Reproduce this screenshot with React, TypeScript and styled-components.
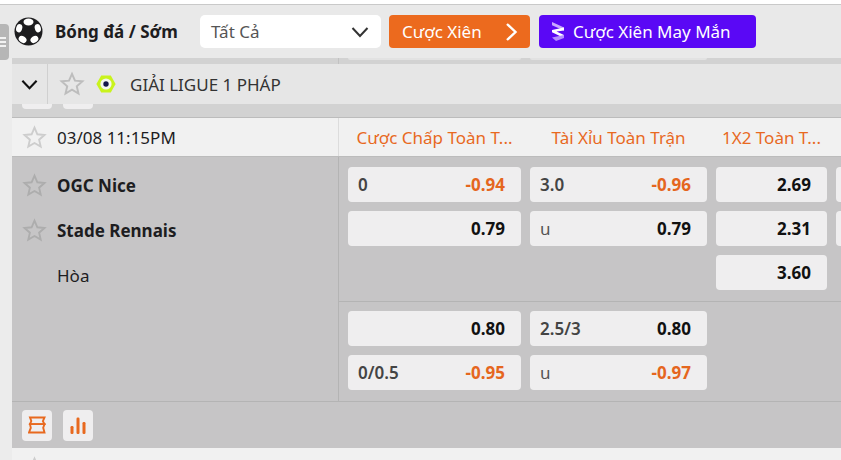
import React from "react";
import { createGlobalStyle, styled } from "styled-components";

const Global = createGlobalStyle`
  html, body { margin: 0; padding: 0; background: #ececec; }
  * { box-sizing: border-box; }
`;

type Odd = { left?: string; right?: string; hot?: boolean; thin?: boolean };

const topOdds: (Odd | null)[][] = [
  [{ left: "0", right: "-0.94", hot: true }, { right: "0.79" }, null],
  [{ left: "3.0", right: "-0.96", hot: true }, { left: "u", right: "0.79", thin: true }, null],
  [{ right: "2.69" }, { right: "2.31" }, { right: "3.60" }],
  [{}, {}, null],
];
const bottomOdds: (Odd | null)[][] = [
  [{ right: "0.80" }, { left: "0/0.5", right: "-0.95", hot: true }],
  [{ left: "2.5/3", right: "0.80" }, { left: "u", right: "-0.97", hot: true, thin: true }],
];

const StarIcon = ({ size = 24, color = "#adadad" }: { size?: number; color?: string }) => (
  <svg width={size} height={size} viewBox="0 0 24 24" fill="none">
    <path
      d="M12 2.6l2.75 6.3 6.85.65-5.17 4.55 1.52 6.7L12 17.3l-5.95 3.5 1.52-6.7L2.4 9.55l6.85-.65z"
      stroke={color}
      strokeWidth="1.8"
      strokeLinejoin="miter"
    />
  </svg>
);

const BallIcon = () => (
  <svg width="29" height="29" viewBox="0 0 29 29">
    <circle cx="14.5" cy="14.5" r="14" fill="#1d1d1f" />
    <path d="M14.5 10l4.4 3.2-1.7 5.2h-5.4l-1.7-5.2z" fill="#1d1d1f" />
    <ellipse cx="14.5" cy="5" rx="5" ry="3.4" fill="#fff" />
    <ellipse cx="5.2" cy="11.2" rx="3" ry="4.2" fill="#fff" transform="rotate(16 5.2 11.2)" />
    <ellipse cx="23.8" cy="11.2" rx="3" ry="4.2" fill="#fff" transform="rotate(-16 23.8 11.2)" />
    <ellipse cx="8.6" cy="22.4" rx="4.2" ry="3.2" fill="#fff" transform="rotate(35 8.6 22.4)" />
    <ellipse cx="20.4" cy="22.4" rx="4.2" ry="3.2" fill="#fff" transform="rotate(-35 20.4 22.4)" />
  </svg>
);

const ChevronDown = ({ size = 20, width = 2 }: { size?: number; width?: number }) => (
  <svg width={size} height={size} viewBox="0 0 20 20" fill="none">
    <path d="M2.5 6l7.5 8 7.5-8" stroke="currentColor" strokeWidth={width} />
  </svg>
);

const LeagueLogo = () => (
  <svg width="20" height="20" viewBox="0 0 20 20">
    <path d="M5.2 1.4h9.6L19.6 10l-4.8 8.6H5.2L.4 10z" fill="#c9f31d" />
    <circle cx="10" cy="10" r="5.6" fill="#f4f6ee" />
    <circle cx="10" cy="10" r="2.7" fill="#14164a" />
  </svg>
);

const LuckyIcon = () => (
  <svg width="14" height="21" viewBox="0 0 14 21">
    <path d="M1 1l12 5.5v3L1 4.2z" fill="#c9a8ff" />
    <path d="M13 6.5v3L5.5 10.5 13 14v3L1 11.2V9z" fill="#fff" />
    <path d="M1 16.5L13 14v3L5 20z" fill="#b48dff" />
  </svg>
);

const LayersIcon = () => (
  <svg width="18" height="18" viewBox="0 0 18 18" fill="none" stroke="#e8691f" strokeWidth="1.9">
    <path d="M2 1.5h14.5l-1.6 3.6 1.6 3H2l1.3-3.1z" />
    <path d="M2 8.1h14.5l-1.3 3.6 1.3 4.8H1l1.8-4.6z" />
  </svg>
);

const BarsIcon = () => (
  <svg width="16" height="17" viewBox="0 0 16 17" fill="#e8691f">
    <rect x="0.5" y="9" width="3" height="8" rx="1.2" />
    <rect x="6.5" y="0.5" width="3" height="16.5" rx="1.2" />
    <rect x="12.5" y="5" width="3" height="12" rx="1.2" />
  </svg>
);

const OddCell = ({ odd }: { odd: Odd }) => (
  <Cell>
    <LineValue $thin={odd.thin}>{odd.left}</LineValue>
    <Price $hot={odd.hot}>{odd.right}</Price>
  </Cell>
);

const App = () => {
  return (
    <Page>
      <Global />
      <SideHandle>
        <HandleLines />
      </SideHandle>
      <TopStrip />
      <Header>
        <BallIcon />
        <Title>Bóng đá / Sớm</Title>
        <FilterSelect>
          Tất Cả
          <ChevronDown size={20} />
        </FilterSelect>
        <ParlayButton>
          Cược Xiên
          <svg width="13" height="20" viewBox="0 0 13 20" fill="none">
            <path d="M2 2l8.5 8L2 18" stroke="#fff" strokeWidth="2.4" />
          </svg>
        </ParlayButton>
        <LuckyButton>
          <LuckyIcon />
          Cược Xiên May Mắn
        </LuckyButton>
      </Header>
      <Content>
        <TopBand>
          <TopBandLeft />
          <TopPeek $width={173} />
          <TopPeek $width={177} />
        </TopBand>
        <LeagueRow>
          <CollapseCell>
            <ChevronDown size={19} width={2.2} />
          </CollapseCell>
          <LeagueStar>
            <StarIcon size={26} color="#bdbdbd" />
          </LeagueStar>
          <LeagueLogo />
          <LeagueName>GIẢI LIGUE 1 PHÁP</LeagueName>
        </LeagueRow>
        <PeekBand>
          <PeekButton />
          <PeekButton />
        </PeekBand>
        <TimeRow>
          <TimeCell>
            <StarIcon size={25} color="#cdcdcd" />
            <TimeText>03/08 11:15PM</TimeText>
          </TimeCell>
          <MarketHead>
            <MarketLabel>Cược Chấp Toàn T...</MarketLabel>
            <MarketLabel>Tài Xỉu Toàn Trận</MarketLabel>
            <MarketLabel>1X2 Toàn T...</MarketLabel>
          </MarketHead>
        </TimeRow>
        <MatchBody>
          <TeamColumn>
            <TeamRow>
              <StarIcon size={25} />
              <TeamName>OGC Nice</TeamName>
            </TeamRow>
            <TeamRow>
              <StarIcon size={25} />
              <TeamName>Stade Rennais</TeamName>
            </TeamRow>
            <TeamRow>
              <DrawName>Hòa</DrawName>
            </TeamRow>
          </TeamColumn>
          <OddsColumn>
            <OddsGroup>
              {topOdds.map((col, i) => (
                <OddsCol key={i}>
                  {col.map((odd, j) =>
                    odd ? <OddCell key={j} odd={odd} /> : <EmptyCell key={j} />
                  )}
                </OddsCol>
              ))}
            </OddsGroup>
            <OddsGroup $last>
              {bottomOdds.map((col, i) => (
                <OddsCol key={i}>
                  {col.map((odd, j) => (odd ? <OddCell key={j} odd={odd} /> : null))}
                </OddsCol>
              ))}
            </OddsGroup>
          </OddsColumn>
        </MatchBody>
        <MatchFooter>
          <ToolButton>
            <LayersIcon />
          </ToolButton>
          <ToolButton>
            <BarsIcon />
          </ToolButton>
        </MatchFooter>
        <NextRow>
          <StarIcon size={25} color="#cdcdcd" />
        </NextRow>
      </Content>
    </Page>
  );
};

const Page = styled.div`
  position: relative;
  width: 841px;
  height: 460px;
  overflow: hidden;
  background: #ececec;
  color: #1d1d1f;
  font-family: "Noto Sans", "Open Sans", sans-serif;
`;
const SideHandle = styled.div`
  position: absolute;
  left: 0;
  top: 24px;
  width: 9px;
  height: 36px;
  background: #b6b6b6;
  border-radius: 0 4px 4px 0;
  display: flex;
  align-items: center;
  z-index: 2;
`;
const HandleLines = styled.div`
  width: 6px;
  height: 10px;
  border-top: 2px solid #f2f2f2;
  border-bottom: 2px solid #f2f2f2;
  background: linear-gradient(#f2f2f2, #f2f2f2) center / 100% 2px no-repeat;
`;
const TopStrip = styled.div`
  height: 5px;
  background: #fff;
  border-bottom: 1px solid #c9c9c9;
`;
const Header = styled.div`
  height: 53px;
  padding-left: 14px;
  display: flex;
  align-items: center;
  background: #e9e9e9;
`;
const Title = styled.div`
  margin-left: 12px;
  width: 145px;
  font-size: 17px;
  font-weight: 700;
  white-space: nowrap;
`;
const FilterSelect = styled.div`
  width: 181px;
  height: 33px;
  background: #fff;
  border-radius: 5px;
  padding: 0 11px 0 11px;
  display: flex;
  align-items: center;
  justify-content: space-between;
  font-size: 17px;
  color: #555;
  & > svg {
    color: #333;
  }
`;
const ParlayButton = styled.div`
  margin-left: 8px;
  width: 141px;
  height: 33px;
  background: #ec6a1e;
  color: #fff;
  border-radius: 4px;
  padding: 0 12px 0 13px;
  display: flex;
  align-items: center;
  justify-content: space-between;
  font-size: 17px;
  white-space: nowrap;
`;
const LuckyButton = styled.div`
  margin-left: 9px;
  width: 217px;
  height: 33px;
  background: #5a08f5;
  color: #fff;
  border-radius: 4px;
  padding-left: 12px;
  display: flex;
  align-items: center;
  gap: 8px;
  font-size: 17px;
  white-space: nowrap;
`;
const Content = styled.div`
  margin-left: 12px;
`;
const TopBand = styled.div`
  height: 6px;
  background: #d2d2d2;
  display: flex;
  gap: 9px;
`;
const TopBandLeft = styled.div`
  width: 327px;
  border-right: 1px solid #c2c2c2;
`;
const TopPeek = styled.div<{ $width: number }>`
  width: ${(p) => p.$width}px;
  height: 2px;
  background: #e2e2e2;
  border-radius: 0 0 4px 4px;
`;
const LeagueRow = styled.div`
  height: 40px;
  background: #e6e6e6;
  display: flex;
  align-items: center;
`;
const CollapseCell = styled.div`
  width: 36px;
  height: 100%;
  border-right: 1px solid #d0d0d0;
  display: flex;
  align-items: center;
  justify-content: center;
  color: #111;
`;
const LeagueStar = styled.div`
  width: 48px;
  display: flex;
  justify-content: center;
`;
const LeagueName = styled.div`
  margin-left: 14px;
  font-size: 17px;
  color: #333;
  white-space: nowrap;
`;
const PeekBand = styled.div`
  height: 14px;
  background: #d2d2d2;
  border-bottom: 1px solid #bcbcbc;
  padding-left: 10px;
  display: flex;
  gap: 11px;
`;
const PeekButton = styled.div`
  width: 30px;
  height: 5px;
  background: #efeeef;
  border-radius: 0 0 4px 4px;
`;
const TimeRow = styled.div`
  height: 39px;
  background: #f1f1f1;
  border-bottom: 1px solid #bcbcbc;
  display: flex;
`;
const TimeCell = styled.div`
  width: 327px;
  padding-left: 10px;
  display: flex;
  align-items: center;
  gap: 10px;
  border-right: 1px solid #dcdcdc;
`;
const TimeText = styled.div`
  font-size: 17px;
  white-space: nowrap;
`;
const MarketHead = styled.div`
  padding-left: 9px;
  display: grid;
  grid-template-columns: 173px 177px 111px;
  gap: 9px;
  align-items: center;
`;
const MarketLabel = styled.div`
  font-size: 17px;
  color: #e8691f;
  text-align: center;
  white-space: nowrap;
`;
const MatchBody = styled.div`
  display: flex;
  background: #c6c5c6;
  border-bottom: 1px solid #b4b4b4;
`;
const TeamColumn = styled.div`
  width: 327px;
  padding: 6px 0 0 10px;
  border-right: 1px solid #b4b4b4;
`;
const TeamRow = styled.div`
  height: 45px;
  display: flex;
  align-items: center;
  gap: 10px;
`;
const TeamName = styled.div`
  font-size: 17px;
  font-weight: 700;
`;
const DrawName = styled.div`
  margin-left: 35px;
  font-size: 17px;
`;
const OddsColumn = styled.div`
  flex: 1;
  min-width: 0;
`;
const OddsGroup = styled.div<{ $last?: boolean }>`
  height: ${(p) => (p.$last ? 99 : 145)}px;
  padding: ${(p) => (p.$last ? 9 : 10)}px 0 0 9px;
  display: grid;
  grid-template-columns: 173px 177px 111px 60px;
  gap: 9px;
  align-items: start;
  border-bottom: ${(p) => (p.$last ? "none" : "1px solid #b4b4b4")};
`;
const OddsCol = styled.div`
  display: flex;
  flex-direction: column;
  gap: 9px;
`;
const Cell = styled.div`
  height: 35px;
  background: #efeeef;
  border-radius: 4px;
  padding: 0 16px 0 10px;
  display: flex;
  align-items: center;
  justify-content: space-between;
  font-size: 17px;
`;
const EmptyCell = styled.div`
  height: 35px;
`;
const LineValue = styled.span<{ $thin?: boolean }>`
  color: ${(p) => (p.$thin ? "#555" : "#444")};
  font-weight: ${(p) => (p.$thin ? 400 : 600)};
`;
const Price = styled.span<{ $hot?: boolean }>`
  color: ${(p) => (p.$hot ? "#e5661e" : "#111")};
  font-weight: 700;
`;
const MatchFooter = styled.div`
  height: 46px;
  background: #c6c5c6;
  padding-left: 10px;
  display: flex;
  align-items: center;
  gap: 11px;
`;
const ToolButton = styled.div`
  width: 30px;
  height: 31px;
  background: #efeeef;
  border-radius: 4px;
  display: flex;
  align-items: center;
  justify-content: center;
`;
const NextRow = styled.div`
  height: 40px;
  background: #f1f1f1;
  padding: 8px 0 0 10px;
`;

export default App;
